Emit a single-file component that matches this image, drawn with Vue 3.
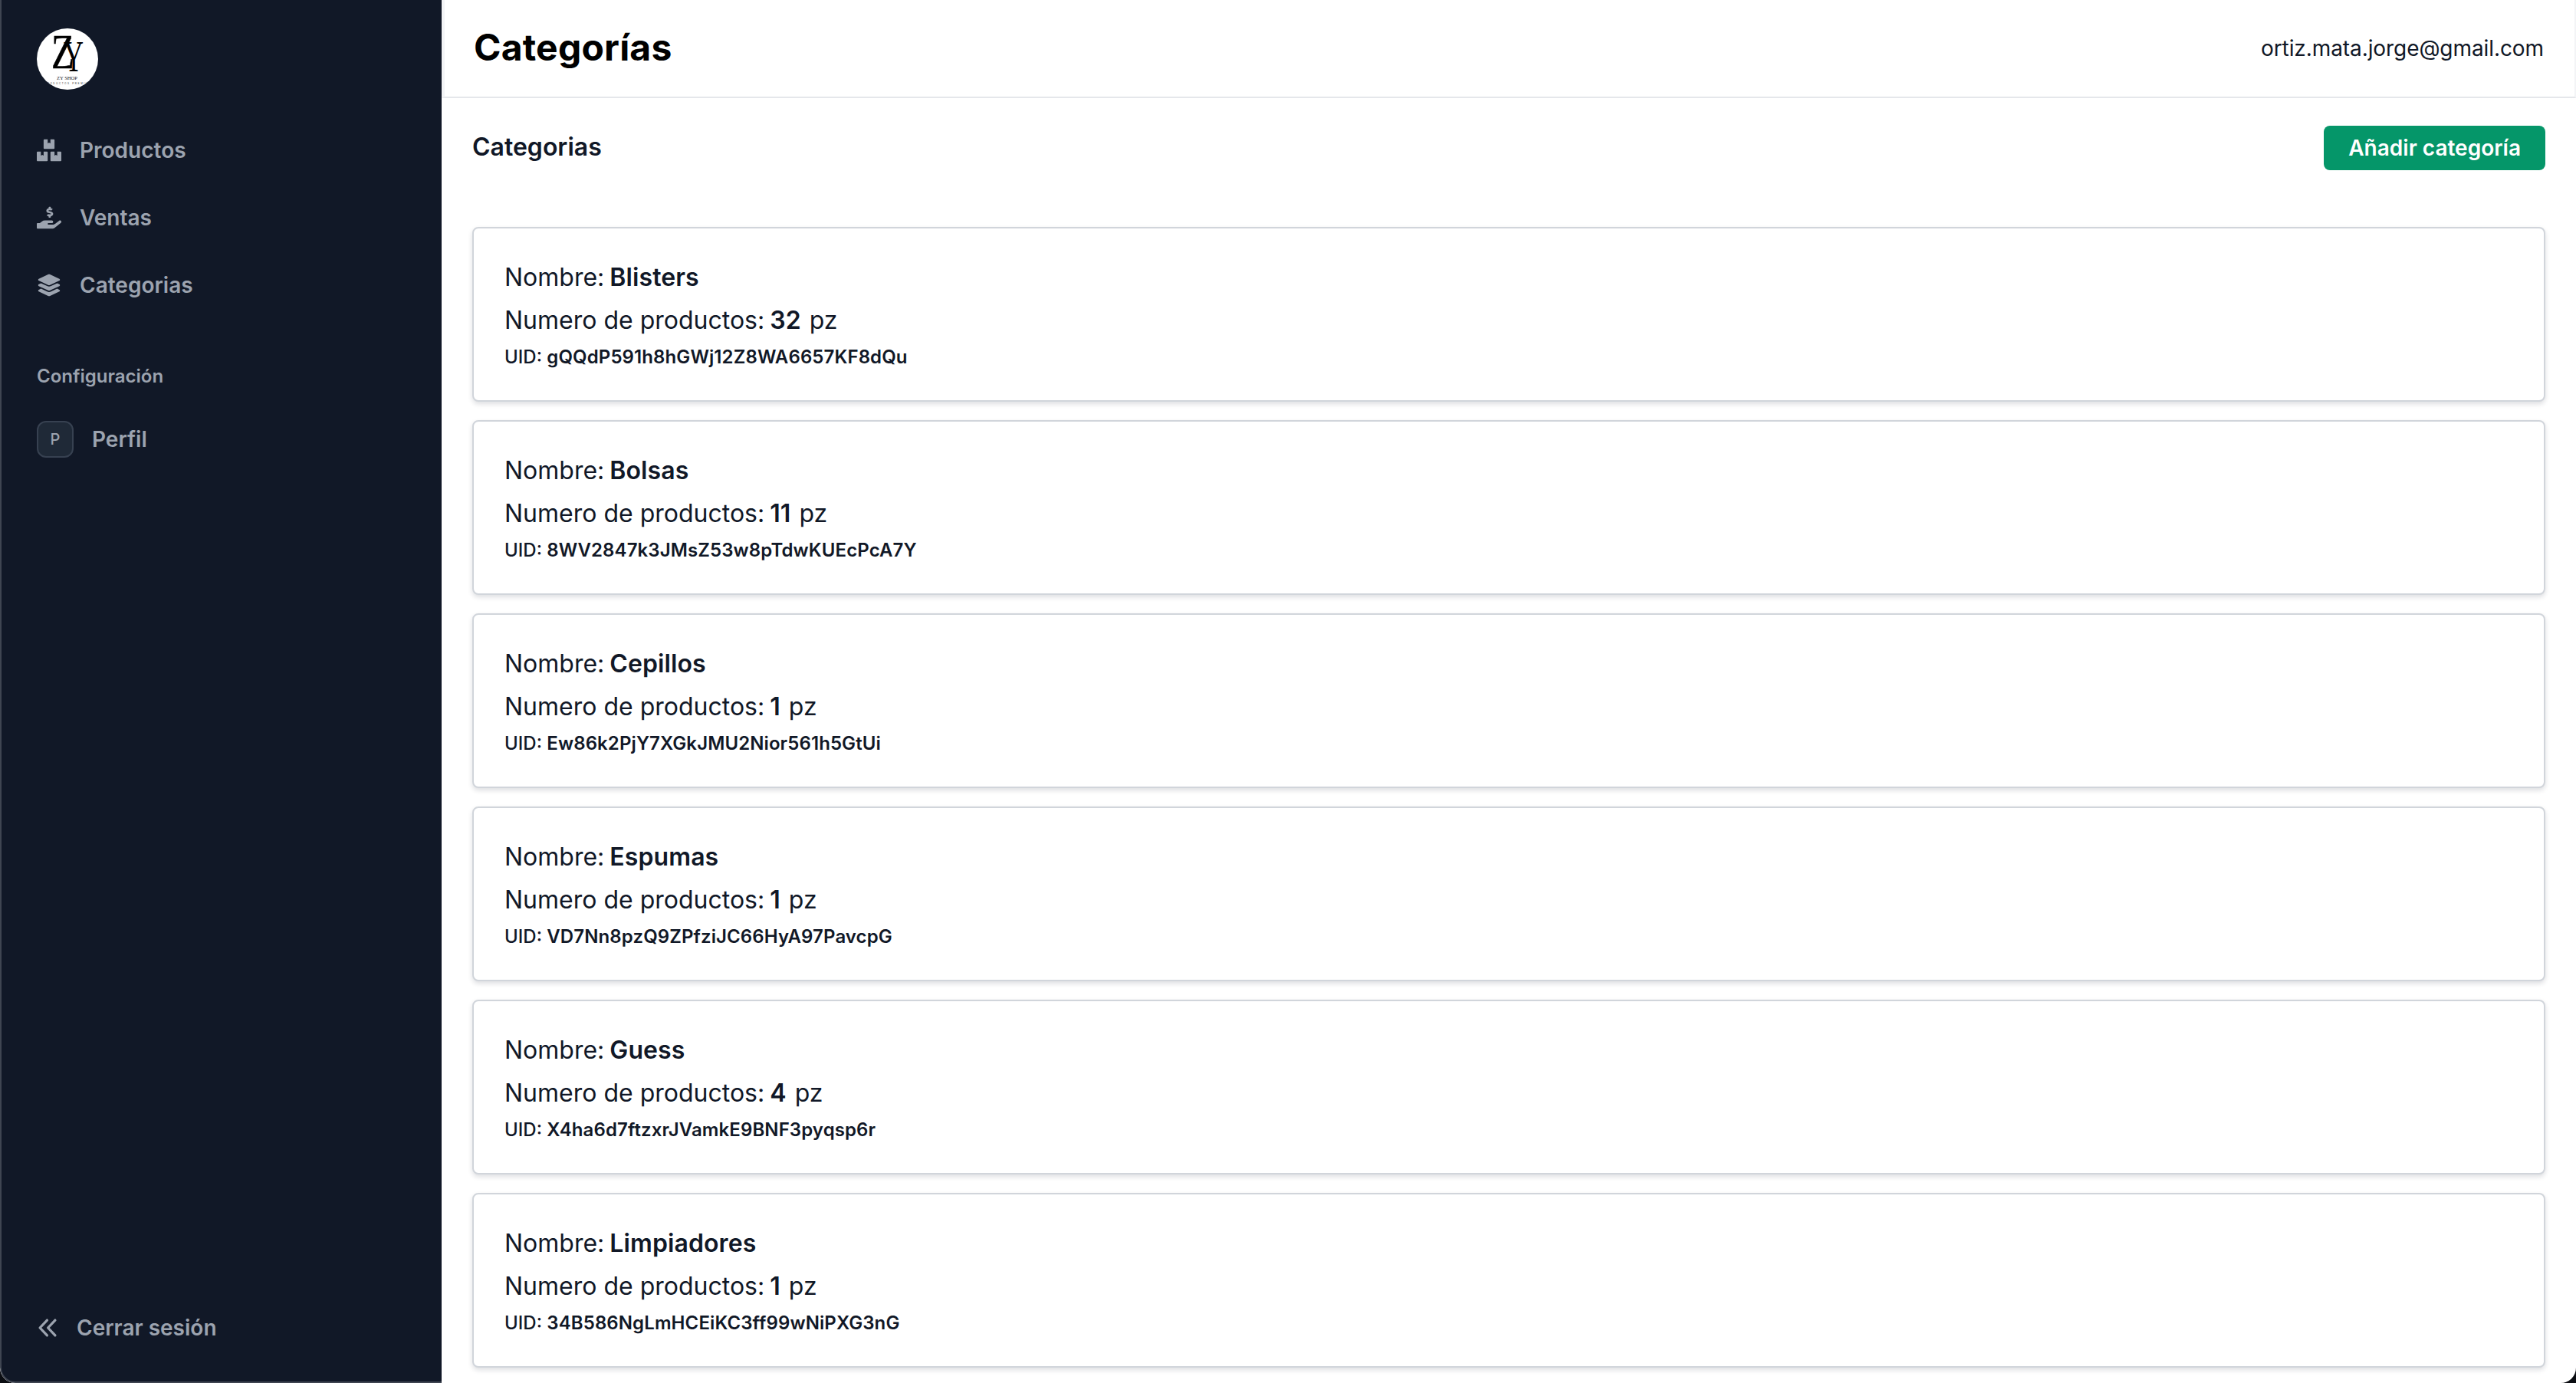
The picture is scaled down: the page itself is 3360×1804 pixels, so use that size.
<template>
  <div class="window">
    <aside class="sidebar">
      <div class="logo">
        <svg viewBox="0 0 80 80" width="80" height="80">
          <defs>
            <clipPath id="logo-clip"><circle cx="40" cy="40" r="40" /></clipPath>
          </defs>
          <circle cx="40" cy="40" r="40" fill="#fff" />
          <g clip-path="url(#logo-clip)">
            <text x="19" y="52" class="logo-z" textLength="30" lengthAdjust="spacingAndGlyphs">Z</text>
            <text x="35" y="56" class="logo-y" textLength="26" lengthAdjust="spacingAndGlyphs">Y</text>
            <text x="26" y="67" class="logo-name" textLength="27" lengthAdjust="spacingAndGlyphs">ZY SHOP</text>
            <text x="10" y="73" class="logo-sub" textLength="60" lengthAdjust="spacing">PRODUCTOS PREMIUM</text>
          </g>
        </svg>
      </div>

      <nav class="nav">
        <a class="nav__item" v-for="item in navItems" :key="item.label">
          <svg class="nav__icon" viewBox="0 0 576 512" fill="currentColor">
            <path :d="item.icon" />
          </svg>
          {{ item.label }}
        </a>
      </nav>

      <div class="config">
        <p class="config__title">Configuración</p>
        <a class="config__item">
          <span class="config__badge">P</span>
          Perfil
        </a>
      </div>

      <a class="logout">
        <svg class="logout__icon" viewBox="0 0 24 24" fill="none" stroke="currentColor" stroke-width="2.8" stroke-linecap="round" stroke-linejoin="round">
          <path d="M11.5 3.5 3.5 12l8 8.5" />
          <path d="M20.5 3.5 12.5 12l8 8.5" />
        </svg>
        Cerrar sesión
      </a>
    </aside>

    <main class="main">
      <header class="header">
        <h1 class="header__title">Categorías</h1>
        <span class="header__user">ortiz.mata.jorge@gmail.com</span>
      </header>

      <div class="content">
        <div class="content__top">
          <h2 class="content__title">Categorias</h2>
          <button class="add-btn">Añadir categoría</button>
        </div>

        <div class="list">
          <div class="card" v-for="cat in categories" :key="cat.uid">
            <p class="card__line">Nombre: <b class="card__strong">{{ cat.name }}</b></p>
            <p class="card__line">Numero de productos: <b class="card__strong">{{ cat.count }}</b> pz</p>
            <p class="card__uid">UID: <span class="card__uid-value">{{ cat.uid }}</span></p>
          </div>
        </div>
      </div>
    </main>
  </div>
</template>

<script setup>
const boxes =
  'M560 288h-80v96l-32-21.3-32 21.3v-96h-80c-8.8 0-16 7.2-16 16v192c0 8.8 7.2 16 16 16h224c8.8 0 16-7.2 16-16V304c0-8.8-7.2-16-16-16zm-384-64h224c8.8 0 16-7.2 16-16V16c0-8.8-7.2-16-16-16h-80v96l-32-21.3L256 96V0h-80c-8.8 0-16 7.2-16 16v192c0 8.8 7.2 16 16 16zm64 64h-80v96l-32-21.3L96 384v-96H16c-8.8 0-16 7.2-16 16v192c0 8.8 7.2 16 16 16h224c8.8 0 16-7.2 16-16V304c0-8.8-7.2-16-16-16z'
const handDollar =
  'M271.06,144.3l54.27,14.3a8.59,8.59,0,0,1,6.63,8.1c0,4.6-4.09,8.4-9.12,8.4h-35.6a30,30,0,0,1-11.19-2.2c-5.24-2.2-11.28-1.7-15.3,2l-19,17.5a11.68,11.68,0,0,0-2.25,2.66,11.42,11.42,0,0,0,3.88,15.74,83.42,83.42,0,0,0,34.51,11.5V240c0,8.8,7.83,16,17.37,16h17.37c9.55,0,17.38-7.2,17.38-16V221.9c32.93-3.6,57.84-31,53.5-63-3.15-23-22.46-41.3-46.56-47.7L282.68,97.4a8.59,8.59,0,0,1-6.63-8.1c0-4.6,4.09-8.4,9.12-8.4h35.6A30,30,0,0,1,332,83.1c5.23,2.2,11.28,1.7,15.3-2l19-17.5A11.31,11.31,0,0,0,368.47,61a11.43,11.43,0,0,0-3.84-15.78,83.82,83.82,0,0,0-34.52-11.5V16c0-8.8-7.82-16-17.37-16H295.37C285.82,0,278,7.2,278,16V34.1c-32.89,3.6-57.85,31-53.51,63C227.63,120.1,247,138.4,271.06,144.3ZM565.27,328.1c-11.8-10.7-30.2-10-42.6,0L430.27,402a63.64,63.64,0,0,1-40,14H272a16,16,0,0,1,0-32h78.29c15.9,0,30.71-10.9,33.25-26.6a31.2,31.2,0,0,0,.46-5.46A32,32,0,0,0,352,320H192a117.66,117.66,0,0,0-74.1,26.29L71.4,384H16A16,16,0,0,0,0,400v96a16,16,0,0,0,16,16H372.77a64,64,0,0,0,40-14L564,377a32,32,0,0,0,1.28-48.9Z'
const layers =
  'M264.5 5.2c14.9-6.9 32.1-6.9 47 0l218.6 101c8.5 3.9 13.9 12.4 13.9 21.8s-5.4 17.9-13.9 21.8l-218.6 101c-14.9 6.9-32.1 6.9-47 0L45.9 149.8C37.4 145.8 32 137.3 32 128s5.4-17.9 13.9-21.8L264.5 5.2zM476.9 209.6l53.2 24.6c8.5 3.9 13.9 12.4 13.9 21.8s-5.4 17.9-13.9 21.8l-218.6 101c-14.9 6.9-32.1 6.9-47 0L45.9 277.8C37.4 273.8 32 265.3 32 256s5.4-17.9 13.9-21.8l53.2-24.6 152 70.2c23.4 10.8 50.4 10.8 73.8 0l152-70.2zm-152 198.2l152-70.2 53.2 24.6c8.5 3.9 13.9 12.4 13.9 21.8s-5.4 17.9-13.9 21.8l-218.6 101c-14.9 6.9-32.1 6.9-47 0L45.9 405.8C37.4 401.8 32 393.3 32 384s5.4-17.9 13.9-21.8l53.2-24.6 152 70.2c23.4 10.8 50.4 10.8 73.8 0z'

const navItems = [
  { label: 'Productos', icon: boxes },
  { label: 'Ventas', icon: handDollar },
  { label: 'Categorias', icon: layers },
]

const categories = [
  { name: 'Blisters', count: 32, uid: 'gQQdP591h8hGWj12Z8WA6657KF8dQu' },
  { name: 'Bolsas', count: 11, uid: '8WV2847k3JMsZ53w8pTdwKUEcPcA7Y' },
  { name: 'Cepillos', count: 1, uid: 'Ew86k2PjY7XGkJMU2Nior561h5GtUi' },
  { name: 'Espumas', count: 1, uid: 'VD7Nn8pzQ9ZPfziJC66HyA97PavcpG' },
  { name: 'Guess', count: 4, uid: 'X4ha6d7ftzxrJVamkE9BNF3pyqsp6r' },
  { name: 'Limpiadores', count: 1, uid: '34B586NgLmHCEiKC3ff99wNiPXG3nG' },
]
</script>

<style>
html,
body {
  margin: 0;
  background: #0b0d12;
}
</style>

<style scoped>
.window {
  display: flex;
  height: 1804px;
  overflow: hidden;
  background: #fff;
  border-radius: 0 0 20px 20px;
  font-family: Inter, 'Liberation Sans', sans-serif;
  color: #111827;
}

.sidebar {
  box-sizing: border-box;
  flex: 0 0 576px;
  display: flex;
  flex-direction: column;
  padding: 37px 0 0 48px;
  background: #111827;
  border-left: 2px solid #3f4551;
  border-bottom: 2px solid #3f4551;
  border-bottom-left-radius: 20px;
  color: #9ca3af;
}

.logo {
  margin-left: -2px;
  height: 80px;
}

.logo svg {
  display: block;
}

.logo-z {
  font: 400 64px 'Liberation Serif', serif;
  fill: #000;
  stroke: #000;
  stroke-width: 0.5px;
}

.logo-y {
  font: 400 56px 'Liberation Serif', serif;
  fill: #000;
}

.logo-name {
  font: 400 7px 'Liberation Serif', serif;
  fill: #222;
}

.logo-sub {
  font: 400 3px 'Liberation Sans', sans-serif;
  fill: #333;
}

.nav {
  display: flex;
  flex-direction: column;
  gap: 40px;
  margin: 55px 0 0 -2px;
}

.nav__item {
  display: flex;
  align-items: center;
  gap: 24px;
  height: 48px;
  font-size: 28px;
  font-weight: 600;
}

.nav__icon {
  flex: none;
  width: 32px;
  height: 32px;
}

.config {
  margin: 79px 0 0 -2px;
}

.config__title {
  margin: 0;
  font-size: 24px;
  line-height: 32px;
  font-weight: 600;
}

.config__item {
  display: flex;
  align-items: center;
  gap: 24px;
  margin-top: 42px;
  font-size: 28px;
  font-weight: 600;
}

.config__badge {
  box-sizing: border-box;
  flex: none;
  display: flex;
  align-items: center;
  justify-content: center;
  width: 48px;
  height: 48px;
  background: #1f2937;
  border: 2px solid #374151;
  border-radius: 12px;
  font-size: 20px;
  font-weight: 500;
}

.logout {
  display: flex;
  align-items: center;
  gap: 24px;
  margin: auto 0 50px -2px;
  height: 40px;
  font-size: 28px;
  font-weight: 600;
}

.logout__icon {
  flex: none;
  width: 28px;
  height: 28px;
}

.main {
  flex: 1;
  min-width: 0;
}

.header {
  box-sizing: border-box;
  display: flex;
  align-items: center;
  justify-content: space-between;
  height: 128px;
  padding: 0 40px 4px 38px;
  border: 2px solid #f3f4f6;
  border-top: 0;
  border-left-width: 4px;
  border-bottom-color: #e5e7eb;
}

.header__title {
  margin: 0;
  font-size: 48px;
  font-weight: 700;
  letter-spacing: 0.2px;
  color: #000;
}

.header__user {
  margin-top: 4px;
  font-size: 28px;
  letter-spacing: -0.08px;
}

.content {
  padding: 36px 40px 0;
}

.content__top {
  display: flex;
  align-items: flex-start;
  justify-content: space-between;
  height: 132px;
}

.content__title {
  margin: 0;
  font-size: 32px;
  line-height: 56px;
  font-weight: 600;
}

.add-btn {
  height: 58px;
  padding: 0 32px;
  border: 0;
  border-radius: 8px;
  background: #059669;
  color: #fff;
  font-family: inherit;
  font-size: 28px;
  font-weight: 600;
}

.list {
  display: flex;
  flex-direction: column;
  gap: 24px;
}

.card {
  padding: 40px;
  background: #fff;
  border: 2px solid #d1d5db;
  border-radius: 8px;
  box-shadow: 0 3px 6px rgba(17, 24, 39, 0.14);
}

.card__line {
  margin: 0 0 8px;
  font-size: 32px;
  line-height: 48px;
}

.card__strong {
  margin: 0 2px 0 -2px;
  font-weight: 600;
  letter-spacing: 0.1px;
}

.card__uid {
  margin: 0;
  font-size: 24px;
  line-height: 32px;
  font-weight: 500;
}

.card__uid-value {
  font-weight: 600;
  letter-spacing: 0.1px;
}
</style>
